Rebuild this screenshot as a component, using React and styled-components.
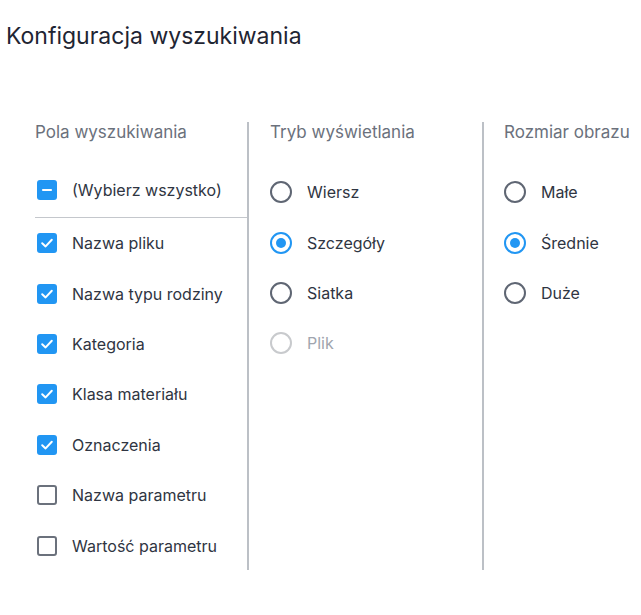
import styled, { createGlobalStyle } from 'styled-components';

const GlobalStyle = createGlobalStyle`
  body {
    margin: 0;
    background: #fff;
    font-family: Inter, 'Noto Sans', Arial, sans-serif;
  }
`;

const Page = styled.div`
  padding: 22px 0 0 6px;
`;

const Title = styled.h1`
  margin: 0;
  font-size: 23px;
  font-weight: 400;
  line-height: 28px;
  color: #1f2533;
`;

const Columns = styled.div`
  display: grid;
  grid-template-columns: 236px 235px 1fr;
  margin: 72px 0 0 7px;
`;

const Column = styled.div`
  padding-left: ${p => p.$pad}px;
  border-right: ${p => (p.$last ? 'none' : '2px solid #bcc0c6')};
  height: 448px;
  box-sizing: border-box;
`;

const Heading = styled.div`
  font-size: 17px;
  line-height: 20px;
  color: #6b717c;
  white-space: nowrap;
  margin-bottom: ${p => (p.$radio ? 25 : 23)}px;
`;

const Row = styled.label`
  display: flex;
  align-items: center;
  gap: 15px;
  height: 50.4px;
  font-size: 16px;
  color: ${p => (p.$disabled ? '#a0a5ae' : '#2f3542')};
  white-space: nowrap;
`;

const SelectAll = styled(Row)`
  height: 53px;
  box-sizing: border-box;
  padding-bottom: 3px;
  border-bottom: 1px solid #c4c7cc;
`;

const Box = styled.span`
  width: 20px;
  height: 20px;
  margin-left: 2px;
  box-sizing: border-box;
  border-radius: 3px;
  flex-shrink: 0;
  display: flex;
  align-items: center;
  justify-content: center;
  background: ${p => (p.$on ? '#2196f3' : '#fff')};
  border: ${p => (p.$on ? 'none' : '2px solid #6b717c')};
`;

const Ring = styled.span`
  width: 22px;
  height: 22px;
  box-sizing: border-box;
  border-radius: 50%;
  flex-shrink: 0;
  display: flex;
  align-items: center;
  justify-content: center;
  border: 2px solid ${p => (p.$on ? '#2196f3' : p.$disabled ? '#c8cacd' : '#5f6673')};
  &::after {
    content: '';
    display: ${p => (p.$on ? 'block' : 'none')};
    width: 10px;
    height: 10px;
    border-radius: 50%;
    background: #2196f3;
  }
`;

const Check = () => (
  <svg width="14" height="14" viewBox="0 0 14 14">
    <path d="M2.2 7.2 L5.6 10.4 L11.8 3.8" fill="none" stroke="#fff" strokeWidth="2" strokeLinecap="round" strokeLinejoin="round" />
  </svg>
);

const Dash = () => (
  <svg width="14" height="14" viewBox="0 0 14 14">
    <path d="M3 7 H11" stroke="#fff" strokeWidth="2.2" strokeLinecap="round" />
  </svg>
);

const fields = [
  ['Nazwa pliku', true],
  ['Nazwa typu rodziny', true],
  ['Kategoria', true],
  ['Klasa materiału', true],
  ['Oznaczenia', true],
  ['Nazwa parametru', false],
  ['Wartość parametru', false],
];

const modes = [
  ['Wiersz', false, false],
  ['Szczegóły', true, false],
  ['Siatka', false, false],
  ['Plik', false, true],
];

const sizes = [
  ['Małe', false],
  ['Średnie', true],
  ['Duże', false],
];

export default function App() {
  return (
    <Page>
      <GlobalStyle />
      <Title>Konfiguracja wyszukiwania</Title>
      <Columns>
        <Column $pad={22}>
          <Heading>Pola wyszukiwania</Heading>
          <SelectAll>
            <Box $on><Dash /></Box>
            (Wybierz wszystko)
          </SelectAll>
          {fields.map(([name, on]) => (
            <Row key={name}>
              <Box $on={on}>{on && <Check />}</Box>
              {name}
            </Row>
          ))}
        </Column>
        <Column $pad={21}>
          <Heading $radio>Tryb wyświetlania</Heading>
          {modes.map(([name, on, disabled]) => (
            <Row key={name} $disabled={disabled}>
              <Ring $on={on} $disabled={disabled} />
              {name}
            </Row>
          ))}
        </Column>
        <Column $pad={20} $last>
          <Heading $radio>Rozmiar obrazu</Heading>
          {sizes.map(([name, on]) => (
            <Row key={name}>
              <Ring $on={on} />
              {name}
            </Row>
          ))}
        </Column>
      </Columns>
    </Page>
  );
}
